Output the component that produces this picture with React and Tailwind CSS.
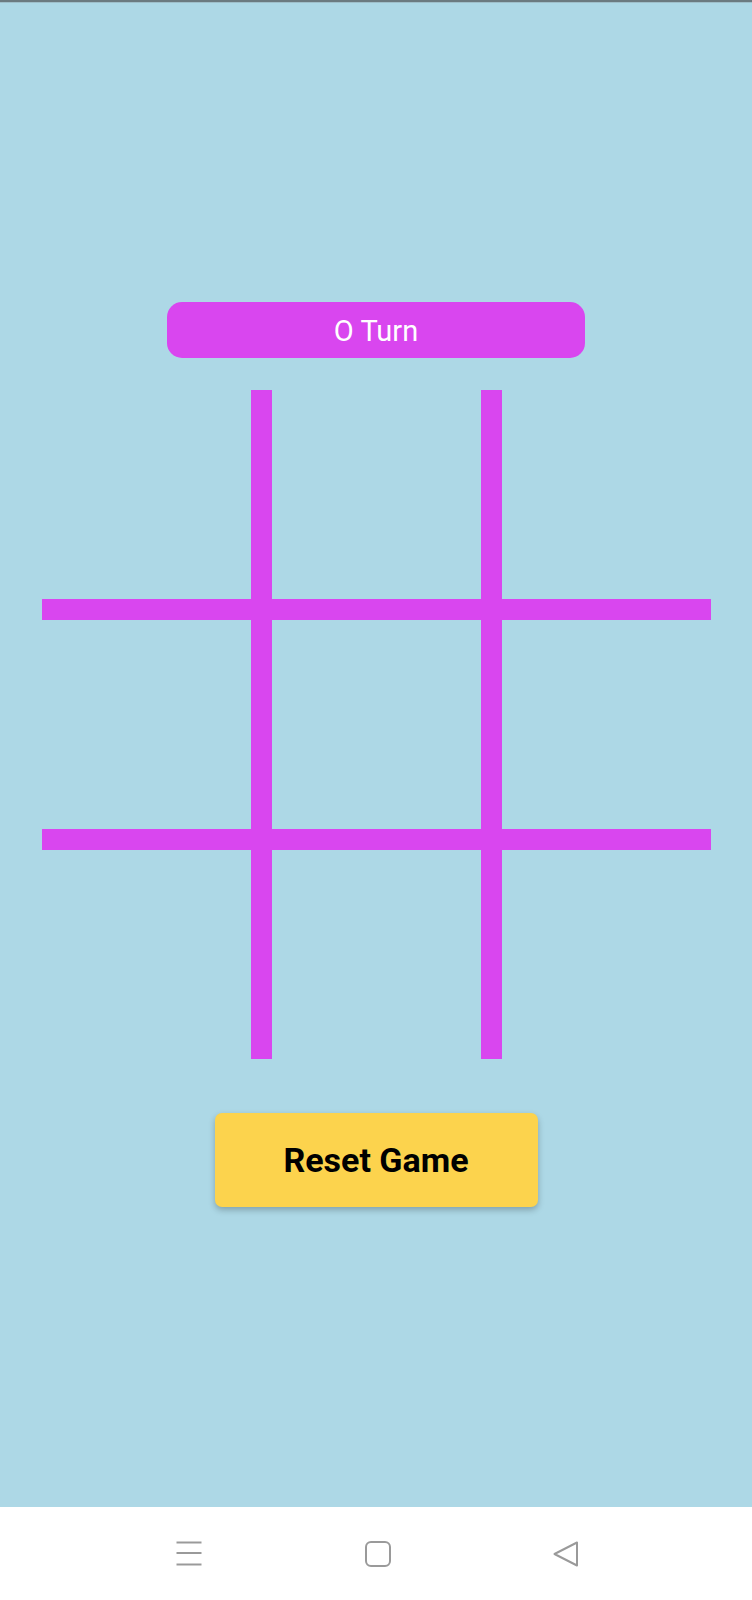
import React from 'react';

const cells = Array.from({ length: 9 });

const App = () => {
  return (
    <div className="w-[752px] h-[1600px] flex flex-col bg-[#add8e6] font-['Roboto',_'Liberation_Sans',_sans-serif]">
      <div className="h-[2px] bg-[#6b7a80]" />
      <div className="h-[1px] bg-[#9fbfca]" />
      <main className="flex-1 flex flex-col items-center justify-center pb-[2px]">
        <div className="w-[418px] h-[56px] rounded-[15px] bg-[#d946ef] flex items-center justify-center">
          <span className="text-white text-[29px] leading-none pt-[4px]">O Turn</span>
        </div>

        <div className="mt-[32px] w-[669px] grid grid-cols-3 gap-[21px] bg-[#d946ef]">
          {cells.map((_, i) => (
            <div key={i} className="h-[209px] bg-[#add8e6]" />
          ))}
        </div>

        <button
          type="button"
          className="mt-[54px] w-[323px] h-[94px] rounded-[7px] bg-[#fcd34d] shadow-[0_3px_6px_rgba(0,0,0,0.25)] text-black font-bold text-[34px] leading-none"
        >
          Reset Game
        </button>
      </main>
      <nav className="h-[93px] bg-white flex items-start pt-[34px]">
        <div className="w-[202px] flex justify-end">
          <svg width="26" height="25" viewBox="0 0 26 25">
            <g stroke="#9a9a9a" strokeWidth="2">
              <line x1="0.5" y1="1.5" x2="25.5" y2="1.5" />
              <line x1="0.5" y1="12" x2="25.5" y2="12" />
              <line x1="0.5" y1="23.5" x2="25.5" y2="23.5" />
            </g>
          </svg>
        </div>
        <div className="ml-[163px]">
          <svg width="26" height="26" viewBox="0 0 26 26">
            <rect x="1" y="1" width="24" height="24" rx="5" fill="none" stroke="#9a9a9a" strokeWidth="2" />
          </svg>
        </div>
        <div className="ml-[162px]">
          <svg width="26" height="26" viewBox="0 0 26 26">
            <path d="M24 1.5 L24 24.5 L1.5 13 Z" fill="none" stroke="#9a9a9a" strokeWidth="2" strokeLinejoin="round" />
          </svg>
        </div>
      </nav>
    </div>
  );
};

export default App;
